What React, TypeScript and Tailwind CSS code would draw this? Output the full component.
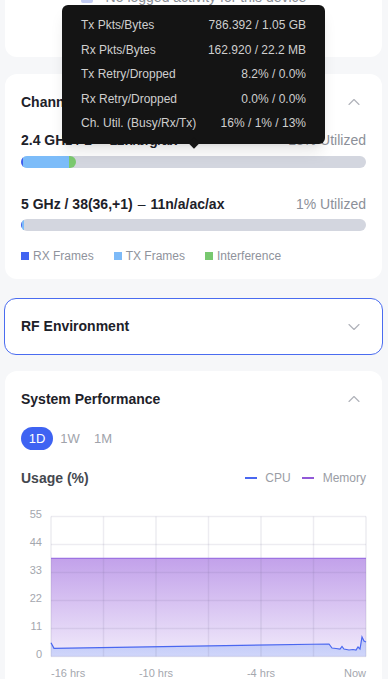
import { ChevronDown, ChevronUp } from "lucide-react"

const tipRows = [
  ["Tx Pkts/Bytes", "786.392 / 1.05 GB"],
  ["Rx Pkts/Bytes", "162.920 / 22.2 MB"],
  ["Tx Retry/Dropped", "8.2% / 0.0%"],
  ["Rx Retry/Dropped", "0.0% / 0.0%"],
  ["Ch. Util. (Busy/Rx/Tx)", "16% / 1% / 13%"],
]

const cpuPts: [number, number][] = [
  [51, 641.7], [54, 647.3], [329, 643], [332, 647], [336, 647.5], [340, 648],
  [342, 645.5], [344, 648], [349, 649], [353, 648.5], [356, 649], [358, 646],
  [360, 648], [362, 636], [364, 640], [366, 641],
]

function Band({ name, mode, util, rx, tx, intf }: { name: string; mode: string; util: string; rx: number; tx: number; intf: number }) {
  return (
    <>
      <div className="flex h-[20px] items-center justify-between text-[14px]">
        <span className="text-[#1d2129]">
          <b>{name}</b>
          <span className="mx-[5px]">–</span>
          <b>{mode}</b>
        </span>
        <span className="text-[#8c9099]">{util}</span>
      </div>
      <div className="flex h-[12px] overflow-hidden rounded-full bg-[#d3d6df]">
        <div className="h-full bg-[#3d5ef0]" style={{ width: rx }} />
        <div className="h-full bg-[#7cbcf9]" style={{ width: tx }} />
        {intf > 0 && <div className="h-full rounded-r-full bg-[#7bc96f]" style={{ width: intf }} />}
      </div>
    </>
  )
}

function Legend({ color, label }: { color: string; label: string }) {
  return (
    <div className="flex items-center gap-[4px]">
      <span className={`h-[8px] w-[8px] ${color}`} />
      <span>{label}</span>
    </div>
  )
}

function UsageChart() {
  const x0 = 51
  const x1 = 366
  const yTop = 515.5
  const yBot = 655.5
  const ys = [55, 44, 33, 22, 11, 0]
  const cpuLine = cpuPts.map((p, i) => `${i ? "L" : "M"}${p[0]},${p[1]}`).join(" ")
  return (
    <svg width={377} height={184} viewBox="5 495 377 184" className="block">
      <defs>
        <linearGradient id="mem" x1="0" y1="0" x2="0" y2="1">
          <stop offset="0" stopColor="#c2a1ea" />
          <stop offset="1" stopColor="#f1ebfb" />
        </linearGradient>
        <linearGradient id="cpu" x1="0" y1="0" x2="0" y2="1">
          <stop offset="0" stopColor="#b4c0f8" />
          <stop offset="1" stopColor="#c8d1fa" />
        </linearGradient>
      </defs>
      <path d={`M${x0},557.3 H${x1} V${yBot} H${x0} Z`} fill="url(#mem)" />
      <path d={`${cpuLine} L${x1},${yBot} L${x0},${yBot} Z`} fill="url(#cpu)" opacity={0.8} />
      {ys.map((_, i) => (
        <line key={i} x1={x0} x2={x1} y1={yTop + i * 28} y2={yTop + i * 28} stroke="rgba(110,100,140,0.12)" strokeWidth={1.5} />
      ))}
      {[0, 1, 2, 3, 4, 5, 6].map((i) => (
        <line key={i} x1={x0 + i * 52.5} x2={x0 + i * 52.5} y1={yTop} y2={yBot} stroke="rgba(110,100,140,0.12)" strokeWidth={1.5} />
      ))}
      <path d={`M${x0},557.3 H${x1}`} stroke="#9d72e2" strokeWidth={1.2} fill="none" />
      <path d={cpuLine} stroke="#4a67f0" strokeWidth={1.2} fill="none" />
      {ys.map((v, i) => (
        <text key={v} x={42} y={yTop + i * 28 + 1} textAnchor="end" fontSize={11} fill="#a4a7ae">
          {v}
        </text>
      ))}
      <text x={51} y={676} fontSize={11} fill="#a4a7ae">-16 hrs</text>
      <text x={156} y={676} fontSize={11} fill="#a4a7ae" textAnchor="middle">-10 hrs</text>
      <text x={261} y={676} fontSize={11} fill="#a4a7ae" textAnchor="middle">-4 hrs</text>
      <text x={366} y={676} fontSize={11} fill="#a4a7ae" textAnchor="end">Now</text>
    </svg>
  )
}

export default function App() {
  return (
    <div className="relative h-[679px] w-[388px] overflow-hidden bg-[#f6f7f9] pl-[5px] pr-[6px] font-['Liberation_Sans',Arial,sans-serif]">
      {/* activity card (scrolled up) */}
      <div className="flex h-[57px] justify-center rounded-b-xl bg-white">
        <div className="-mt-[13px] flex h-[20px] items-center gap-[13px] text-[14px] text-[#8a8e96]">
          <span className="flex h-[12px] w-[12px] items-center justify-center rounded-[2px] bg-[#c3cdf3] text-[9px] font-bold text-white">i</span>
          <span>No logged activity for this device</span>
        </div>
      </div>

      <div className="mt-[17px] rounded-xl bg-white px-[16px] pb-[15px]">
        <div className="flex h-[56px] items-center justify-between">
          <span className="text-[14px] font-bold text-[#1d2129]">Channel Utilization</span>
          <ChevronUp size={20} strokeWidth={1.4} className="mr-[2px] text-[#b0b3ba]" />
        </div>
        <div className="flex flex-col gap-[6px]">
          <Band name="2.4 GHz / 1" mode="11n/b/g/ax" util="13% Utilized" rx={2} tx={46} intf={7} />
        </div>
        <div className="mt-[26px] flex flex-col gap-[5px]">
          <Band name="5 GHz / 38(36,+1)" mode="11n/a/ac/ax" util="1% Utilized" rx={1} tx={2} intf={0} />
        </div>
        <div className="mt-[17px] flex h-[16px] items-center gap-[20px] text-[12px] text-[#8f939c]">
          <Legend color="bg-[#4264f1]" label="RX Frames" />
          <Legend color="bg-[#7dbaf8]" label="TX Frames" />
          <Legend color="bg-[#78c86f]" label="Interference" />
        </div>
      </div>

      <div className="mt-[19px] flex h-[57px] items-center justify-between rounded-xl border border-[#4a6cf0] bg-white pl-[16px] pr-[16px] -mx-[1px]">
        <span className="text-[14px] font-bold text-[#1d2129]">RF Environment</span>
        <ChevronDown size={20} strokeWidth={1.4} className="mr-[2px] text-[#b0b3ba]" />
      </div>

      <div className="mt-[16px] rounded-t-xl bg-white">
        <div className="flex h-[56px] items-center justify-between px-[16px]">
          <span className="text-[14px] font-bold text-[#1d2129]">System Performance</span>
          <ChevronUp size={20} strokeWidth={1.4} className="mr-[2px] text-[#b0b3ba]" />
        </div>
        <div className="flex px-[16px] text-[13px]">
          <span className="flex h-[23px] w-[32px] items-center justify-center rounded-full bg-[#3e63f2] text-white">1D</span>
          <span className="flex h-[23px] w-[34px] items-center justify-center text-[#a0a3ab]">1W</span>
          <span className="flex h-[23px] w-[32px] items-center justify-center text-[#a0a3ab]">1M</span>
        </div>
        <div className="mt-[18px] flex h-[20px] items-center justify-between px-[16px]">
          <span className="text-[14px] font-bold text-[#44484f]">Usage (%)</span>
          <div className="flex items-center text-[12px] text-[#9a9da5]">
            <span className="mr-[8px] h-[2px] w-[12px] bg-[#4a67f0]" />
            <span>CPU</span>
            <span className="ml-[11px] mr-[9px] h-[2px] w-[12px] bg-[#9159d8]" />
            <span>Memory</span>
          </div>
        </div>
        <div className="mt-[8px]">
          <UsageChart />
        </div>
      </div>

      {/* tooltip over the 2.4 GHz bar */}
      <div className="absolute left-[62px] top-[5px] w-[263px] rounded-[6px] bg-[#141414] px-[19px] py-[8px] text-[12px] text-[#cfcfcf] shadow-lg">
        {tipRows.map(([k, v]) => (
          <div key={k} className="flex h-[24.5px] items-center justify-between">
            <span>{k}</span>
            <span>{v}</span>
          </div>
        ))}
        <div className="absolute left-[128px] top-[134px] h-[8px] w-[8px] rotate-45 bg-[#141414]" />
      </div>
    </div>
  )
}
